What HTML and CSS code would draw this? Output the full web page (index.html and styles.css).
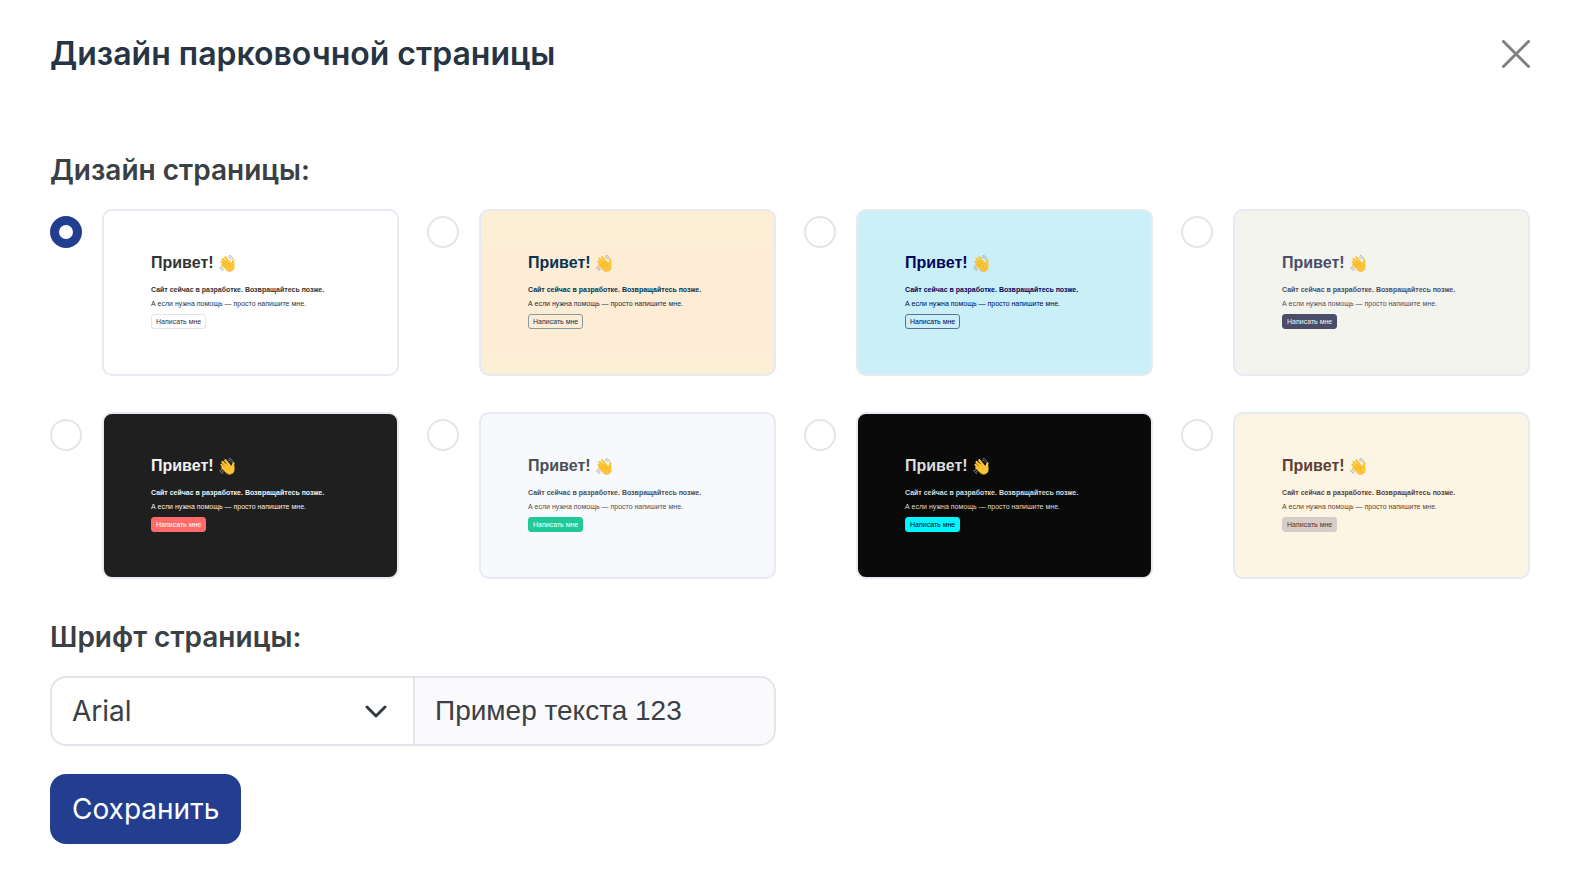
FILE: index.html
```html
<!DOCTYPE html>
<html lang="ru">

<head>
    <meta charset="UTF-8">
    <meta name="viewport" content="width=device-width, initial-scale=1.0">
    <title>Дизайн парковочной страницы</title>
    <link rel="stylesheet" href="styles.css">
</head>

<body>
    <svg class="sprite" aria-hidden="true">
        <symbol id="wave" viewBox="0 0 34 34">
            <g fill="none" stroke="#9b9b9b" stroke-width="1.6" stroke-linecap="round">
                <path d="M19 4c2.500 .3 4.200 1.800 4.800 4M20.500 1c3.600 .6 6 2.800 6.800 6"/>
                <path d="M4.500 23c.4 2.400 1.800 4 4 4.600M1.500 24.500c.6 3.400 2.800 5.400 6 6"/>
            </g>
            <g fill="none" stroke="#fcc535" stroke-width="4.400" stroke-linecap="round">
                <path d="M7 8l10 11M12.500 4.500l9 11M5 13.500l10 10M6.500 19.500l8 7"/>
                <path d="M29 10.500c-1.500 2.500-.5 5-1.500 8"/>
            </g>
            <path d="M13 11l11 5 4-5c2.500 1.500 3.500 8 3 12.500-.8 5.500-5 9-10 8.800-4-.2-8.500-4.300-12-8.300z" fill="#fcc535"/>
            <path d="M10.500 8l8 9.500M7.500 12.500l8.500 9M7.500 18.500l6 5.500M24 17c-3 1.500-4.500 4-3.800 7.500" fill="none" stroke="#e09a22" stroke-width=".8" stroke-linecap="round"/>
            <path d="M13 29.500c3 2.500 5.500 3.400 8.500 3.300 4.500-.2 8-3 9.300-7" fill="none" stroke="#f09a1c" stroke-width="1.200"/>
        </symbol>
    </svg>
    <form class="modal">
        <div class="modal_head">
            <h1>Дизайн парковочной страницы</h1>
            <button type="button" class="close" aria-label="Закрыть">
                <svg viewBox="0 0 28 28"><path d="M1.500 1.500l25 25M26.500 1.500l-25 25"/></svg>
            </button>
        </div>
        <h2>Дизайн страницы:</h2>
        <div class="designs">
            <label class="design">
                <input type="radio" name="design" checked>
                <span class="preview light">
                    <span class="hello">Привет! <svg><use href="#wave"/></svg></span>
                    <b>Сайт сейчас в разработке. Возвращайтесь позже.</b>
                    <span>А если нужна помощь — просто напишите мне.</span>
                    <span class="write">Написать мне</span>
                </span>
            </label>
            <label class="design">
                <input type="radio" name="design">
                <span class="preview peach">
                    <span class="hello">Привет! <svg><use href="#wave"/></svg></span>
                    <b>Сайт сейчас в разработке. Возвращайтесь позже.</b>
                    <span>А если нужна помощь — просто напишите мне.</span>
                    <span class="write">Написать мне</span>
                </span>
            </label>
            <label class="design">
                <input type="radio" name="design">
                <span class="preview sky">
                    <span class="hello">Привет! <svg><use href="#wave"/></svg></span>
                    <b>Сайт сейчас в разработке. Возвращайтесь позже.</b>
                    <span>А если нужна помощь — просто напишите мне.</span>
                    <span class="write">Написать мне</span>
                </span>
            </label>
            <label class="design">
                <input type="radio" name="design">
                <span class="preview stone">
                    <span class="hello">Привет! <svg><use href="#wave"/></svg></span>
                    <b>Сайт сейчас в разработке. Возвращайтесь позже.</b>
                    <span>А если нужна помощь — просто напишите мне.</span>
                    <span class="write">Написать мне</span>
                </span>
            </label>
            <label class="design">
                <input type="radio" name="design">
                <span class="preview dark">
                    <span class="hello">Привет! <svg><use href="#wave"/></svg></span>
                    <b>Сайт сейчас в разработке. Возвращайтесь позже.</b>
                    <span>А если нужна помощь — просто напишите мне.</span>
                    <span class="write">Написать мне</span>
                </span>
            </label>
            <label class="design">
                <input type="radio" name="design">
                <span class="preview mint">
                    <span class="hello">Привет! <svg><use href="#wave"/></svg></span>
                    <b>Сайт сейчас в разработке. Возвращайтесь позже.</b>
                    <span>А если нужна помощь — просто напишите мне.</span>
                    <span class="write">Написать мне</span>
                </span>
            </label>
            <label class="design">
                <input type="radio" name="design">
                <span class="preview neon">
                    <span class="hello">Привет! <svg><use href="#wave"/></svg></span>
                    <b>Сайт сейчас в разработке. Возвращайтесь позже.</b>
                    <span>А если нужна помощь — просто напишите мне.</span>
                    <span class="write">Написать мне</span>
                </span>
            </label>
            <label class="design">
                <input type="radio" name="design">
                <span class="preview coffee">
                    <span class="hello">Привет! <svg><use href="#wave"/></svg></span>
                    <b>Сайт сейчас в разработке. Возвращайтесь позже.</b>
                    <span>А если нужна помощь — просто напишите мне.</span>
                    <span class="write">Написать мне</span>
                </span>
            </label>
        </div>
        <h2><label for="font">Шрифт страницы:</label></h2>
        <div class="font_row">
            <div class="font_select">
                <select id="font">
                    <option>Arial</option>
                </select>
                <svg viewBox="0 0 22 14"><path d="M2 2l9 9 9-9"/></svg>
            </div>
            <div class="font_sample">Пример текста 123</div>
        </div>
        <button type="submit" class="save">Сохранить</button>
    </form>
</body>

</html>
```
FILE: styles.css
```css
* {
    box-sizing: border-box;
}
body {
    margin: 0;
    background-color: #fff;
    color: #3a4044;
    font-family: Inter, "Liberation Sans", sans-serif;
    font-size: 28px;
}
.sprite {
    display: none;
}
.modal {
    padding: 34px 50px 36px;
}
.modal_head {
    display: flex;
    justify-content: space-between;
    align-items: center;
    margin-bottom: 78px;
}
h1 {
    margin: 0;
    color: #273444;
    font-size: 32px;
    font-weight: 600;
    line-height: 40px;
}
h2 {
    margin: 0 0 21px;
    font-size: 28px;
    font-weight: 600;
    line-height: 36px;
}
.close {
    padding: 0;
    border: none;
    background: none;
    cursor: pointer;
}
.close svg {
    display: block;
    width: 28px;
    height: 28px;
    fill: none;
    stroke: #808080;
    stroke-width: 3;
    stroke-linecap: round;
}
.designs {
    display: grid;
    grid-template-columns: repeat(4, 1fr);
    gap: 36px 28px;
    margin-bottom: 40px;
}
.design {
    display: flex;
    align-items: flex-start;
    gap: 20px;
    cursor: pointer;
}
.design input {
    appearance: none;
    flex: none;
    width: 32px;
    height: 32px;
    margin: 7px 0 0;
    border: 2px solid #e4e4ea;
    border-radius: 50%;
    background-color: #fff;
}
.design input:checked {
    border: 9px solid #243e8f;
}
.preview {
    flex: 1;
    display: flex;
    flex-direction: column;
    align-items: flex-start;
    padding: 42px 47px 45px;
    border: 2px solid #e7eaf1;
    border-radius: 10px;
    font-family: "Liberation Sans", Arial, sans-serif;
    font-size: 7px;
    line-height: 14px;
    white-space: nowrap;
}
.hello {
    display: flex;
    align-items: center;
    gap: 5px;
    margin-bottom: 10px;
    font-size: 16px;
    font-weight: bold;
    line-height: 20px;
}
.hello svg {
    width: 17px;
    height: 17px;
}
.write {
    margin-top: 3px;
    padding: 0 4px;
    border: 1px solid;
    border-radius: 3px;
    line-height: 13px;
}
.light {
    background-color: #fff;
    color: #333;
}
.light .write {
    border-color: #e4e4e4;
}
.peach {
    background: linear-gradient(#fbefd5 32px, #fdecd6 32px, #fdecd6 146px, #fbefd5 146px);
    color: #073450;
}
.peach .write {
    border-color: #8b9a9c;
}
.sky {
    background: linear-gradient(#cbf0f8 32px, #c9eff7 32px, #c9eff7 146px, #cbf0f8 146px);
    color: #03045e;
}
.sky .write {
    border-color: #6668a0;
}
.stone {
    background-color: #f4f4ef;
    color: #4a4e69;
}
.stone .write {
    background-color: #4a4e69;
    border-color: #4a4e69;
    color: #f4f4ef;
}
.dark {
    background-color: #1f1f1f;
    color: #f1f1f1;
}
.dark .write {
    background-color: #ff6b6b;
    border-color: #ff6b6b;
    color: #fff;
}
.mint {
    background-color: #f8f9fc;
    color: #4a4f55;
}
.mint .write {
    background-color: #20c997;
    border-color: #20c997;
    color: #fff;
}
.neon {
    background-color: #0a0a0a;
    color: #dcdcdc;
}
.neon .write {
    background-color: #00f5ff;
    border-color: #00f5ff;
    color: #0a0a0a;
}
.coffee {
    background-color: #fdf5e3;
    color: #5d4037;
}
.coffee .write {
    background-color: #d7ccc8;
    border-color: #d7ccc8;
    color: #4e342e;
}
.font_row {
    display: grid;
    grid-template-columns: 1fr 1fr;
    width: calc(50% - 14px);
    margin-bottom: 28px;
    border: 2px solid #e4e4ea;
    border-radius: 16px;
    line-height: 66px;
    overflow: hidden;
}
.font_select {
    position: relative;
}
.font_select select {
    appearance: none;
    display: block;
    width: 100%;
    height: 66px;
    padding: 0 60px 0 20px;
    border: none;
    background: none;
    color: inherit;
    font: inherit;
}
.font_select svg {
    position: absolute;
    top: 27px;
    right: 26px;
    width: 22px;
    height: 14px;
    fill: none;
    stroke: #333a40;
    stroke-width: 3;
    stroke-linecap: round;
    stroke-linejoin: round;
    pointer-events: none;
}
.font_sample {
    padding: 0 20px;
    border-left: 2px solid #e4e4ea;
    background-color: #fafafc;
    font-family: "Liberation Sans", Arial, sans-serif;
}
.save {
    height: 70px;
    padding: 0 22px;
    border: none;
    border-radius: 16px;
    background-color: #243e8f;
    color: #fff;
    font: inherit;
    cursor: pointer;
}
```
